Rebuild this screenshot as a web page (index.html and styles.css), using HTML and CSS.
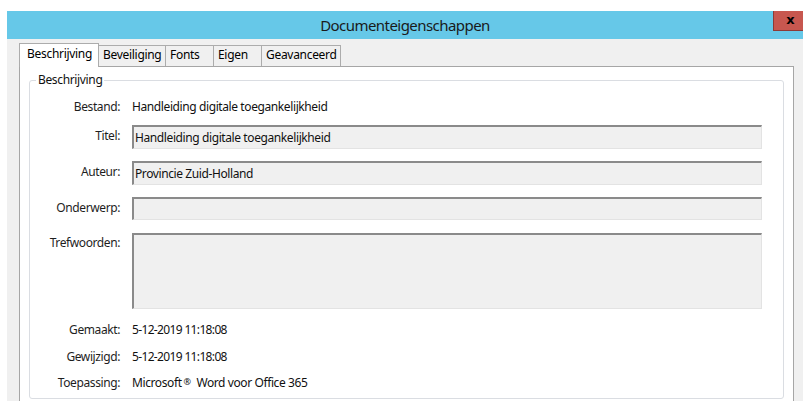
FILE: index.html
```html
<!DOCTYPE html>
<html lang="nl">
<head>
<meta charset="utf-8">
<title>Documenteigenschappen</title>
<link rel="stylesheet" href="styles.css">
</head>
<body>
<div class="window">
  <div class="titlebar">
    <span class="title">Documenteigenschappen</span>
    <button class="close" type="button" aria-label="Sluiten">x</button>
  </div>
  <div class="client">
    <div class="tabs">
      <div class="tab tab-active tab-w1">Beschrijving</div>
      <div class="tab tab-w2">Beveiliging</div>
      <div class="tab tab-w3">Fonts</div>
      <div class="tab tab-w3">Eigen</div>
      <div class="tab tab-w4">Geavanceerd</div>
    </div>
    <div class="panel">
      <fieldset class="group">
        <legend>Beschrijving</legend>
        <div class="row row-text row-first">
          <span class="label">Bestand:</span>
          <span class="value">Handleiding digitale toegankelijkheid</span>
        </div>
        <div class="row row-field row-gap9">
          <span class="label">Titel:</span>
          <div class="field">Handleiding digitale toegankelijkheid</div>
        </div>
        <div class="row row-field">
          <span class="label">Auteur:</span>
          <div class="field">Provincie Zuid-Holland</div>
        </div>
        <div class="row row-field">
          <span class="label">Onderwerp:</span>
          <div class="field"></div>
        </div>
        <div class="row row-area">
          <span class="label">Trefwoorden:</span>
          <div class="field field-area"></div>
        </div>
        <div class="row row-text row-gap12">
          <span class="label">Gemaakt:</span>
          <span class="value value-num">5-12-2019 11:18:08</span>
        </div>
        <div class="row row-text row-gap9">
          <span class="label">Gewijzigd:</span>
          <span class="value value-num">5-12-2019 11:18:08</span>
        </div>
        <div class="row row-text row-gap8">
          <span class="label">Toepassing:</span>
          <span class="value">Microsoft<sup class="reg">®</sup> Word voor Office 365</span>
        </div>
      </fieldset>
    </div>
  </div>
</div>
</body>
</html>
```
FILE: styles.css
```css
html, body {
  margin: 0;
  padding: 0;
  background: #ffffff;
  overflow: hidden;
}

body {
  font-family: "Noto Sans", "Open Sans", sans-serif;
  font-size: 12px;
  color: #111111;
}

.window {
  margin: 11px 0 0 7px;
  width: 796px;
  height: 390px;
  background: #f0f0f0;
  overflow: hidden;
}

/* caption bar */
.titlebar {
  position: relative;
  height: 28px;
  background: #66c8e8;
  display: flex;
  align-items: center;
  justify-content: center;
}

.title {
  font-size: 15px;
  color: #1a1a1a;
  letter-spacing: -0.55px;
}

.close {
  position: absolute;
  top: 0;
  right: 0;
  width: 30px;
  height: 20px;
  margin: 0;
  padding: 0 0 2px 4px;
  border: none;
  border-left: 1px solid #8e3a36;
  border-bottom: 1px solid #8e3a36;
  background: #c7574f;
  color: #000000;
  font-family: "DejaVu Sans", sans-serif;
  font-weight: bold;
  font-size: 13px;
  line-height: 17px;
  text-align: center;
}

/* dialog body */
.client {
  padding: 5px 9px 0 12px;
}

.tabs {
  display: flex;
  align-items: flex-end;
  height: 22px;
  position: relative;
  z-index: 1;
}

.tab {
  box-sizing: border-box;
  height: 21px;
  border: 1px solid #acacac;
  border-bottom: none;
  background: #f0f0f0;
  margin-left: -1px;
  padding-left: 4px;
  line-height: 18px;
  white-space: nowrap;
  letter-spacing: -0.3px;
  color: #000000;
}

.tab-active {
  height: 24px;
  margin-left: 0;
  margin-bottom: -1px;
  background: #ffffff;
  padding-left: 7px;
  line-height: 20px;
  position: relative;
  z-index: 2;
}

.tab-w1 { width: 80px; }
.tab-w2 { width: 68px; }
.tab-w3 { width: 49px; }
.tab-w4 { width: 80px; }

.panel {
  box-sizing: border-box;
  width: 775px;
  height: 360px;
  margin-top: 0;
  border: 1px solid #a6a6a6;
  background: #ffffff;
  padding: 5px 9px 0 9px;
}

.group {
  box-sizing: border-box;
  width: 755px;
  margin: 0;
  padding: 10px 0 6px 0;
  border: 1px solid #dadde2;
  border-radius: 3px;
}

.group legend {
  margin-left: 6px;
  padding: 0 2px;
  line-height: 16px;
  letter-spacing: -0.35px;
}

.row {
  display: grid;
  grid-template-columns: 90px 630px;
  column-gap: 12px;
  margin-top: 13px;
}

.row-first { margin-top: 0; }
.row-gap8 { margin-top: 8px; }
.row-gap9 { margin-top: 9px; }
.row-gap12 { margin-top: 12px; }

.row-text { height: 18px; line-height: 18px; }
.row-field { height: 23px; line-height: 21px; }
.row-area { height: 76px; }

.label {
  text-align: right;
  white-space: nowrap;
  letter-spacing: -0.4px;
  color: #1e1e1e;
}

.row-area .label {
  line-height: 18px;
  padding-top: 1px;
}

.value {
  white-space: nowrap;
  letter-spacing: -0.4px;
}

.value-num {
  letter-spacing: -0.65px;
}

.reg {
  font-size: 9px;
  vertical-align: 2px;
  margin: 0 3px 0 2px;
  line-height: 0;
}

/* read-only sunken text boxes */
.field {
  box-sizing: border-box;
  height: 100%;
  background: #f0f0f0;
  border-top: 2px solid #8a8a8a;
  border-left: 2px solid #8a8a8a;
  border-right: 1px solid #e3e3e3;
  border-bottom: 1px solid #e3e3e3;
  padding-left: 1px;
  white-space: nowrap;
  letter-spacing: -0.4px;
}

.field-area {
  height: 76px;
}
```
